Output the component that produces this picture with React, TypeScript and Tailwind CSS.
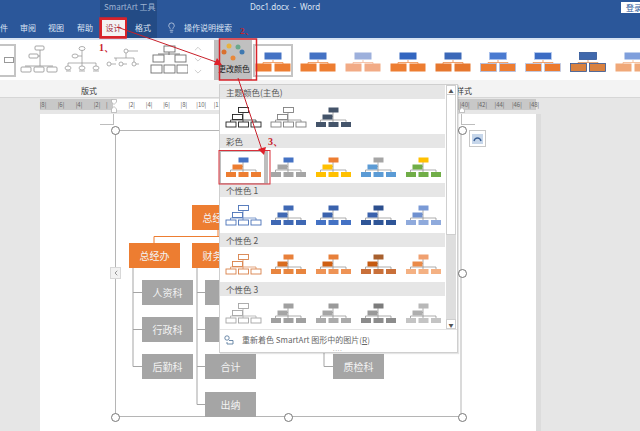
import React from "react";
import { Lightbulb, ChevronUp, ChevronDown, ChevronLeft } from "lucide-react";

type T = { top: string; mid: string; bot: string; outline?: string };

function ColorThumb({ t }: { t: T }) {
  const p = t.outline
    ? { fill: "#ffffff", stroke: t.outline, strokeWidth: 0.9 }
    : { stroke: "none" };
  return (
    <svg width="37" height="21" viewBox="0 0 37 21" className="shrink-0">
      <path d="M18 5V15M5.500 15V13H31V15M18 9.500H17" stroke={t.outline ?? "#8a8a8a"} strokeWidth="0.7" fill="none" />
      <rect x="13.500" y="0.500" width="10" height="5" fill={t.outline ? "#fff" : t.top} {...p} />
      <rect x="7.500" y="7.500" width="10" height="5" fill={t.outline ? "#fff" : t.mid} {...p} />
      <rect x="1" y="15" width="10" height="5" fill={t.outline ? "#fff" : t.bot} {...p} />
      <rect x="13.500" y="15" width="10" height="5" fill={t.outline ? "#fff" : t.bot} {...p} />
      <rect x="26" y="15" width="10" height="5" fill={t.outline ? "#fff" : t.bot} {...p} />
    </svg>
  );
}

const sections: { title: string; body: string; items: T[] }[] = [
  {
    title: "主题颜色(主色)",
    body: "h-[35px] pt-[8px]",
    items: [
      { top: "", mid: "", bot: "", outline: "#222222" },
      { top: "", mid: "", bot: "", outline: "#7f7f7f" },
      { top: "#44546a", mid: "#44546a", bot: "#44546a" },
    ],
  },
  {
    title: "彩色",
    body: "h-[35px] pt-[9px]",
    items: [
      { top: "#4472c4", mid: "#ed7d31", bot: "#ed7d31" },
      { top: "#4472c4", mid: "#a5a5a5", bot: "#a5a5a5" },
      { top: "#ed7d31", mid: "#ffc000", bot: "#ffc000" },
      { top: "#a5a5a5", mid: "#5b9bd5", bot: "#5b9bd5" },
      { top: "#ffc000", mid: "#70ad47", bot: "#70ad47" },
    ],
  },
  {
    title: "个性色 1",
    body: "h-[36px] pt-[8px]",
    items: [
      { top: "", mid: "", bot: "", outline: "#4a72b8" },
      { top: "#3f68b4", mid: "#3f68b4", bot: "#3f68b4" },
      { top: "#3a62ad", mid: "#3a62ad", bot: "#4472c4" },
      { top: "#2c4f8e", mid: "#3a62ad", bot: "#2f5597" },
      { top: "#7a9ad6", mid: "#6f90cf", bot: "#8faadc" },
    ],
  },
  {
    title: "个性色 2",
    body: "h-[35px] pt-[7px]",
    items: [
      { top: "", mid: "", bot: "", outline: "#d9824a" },
      { top: "#e8803a", mid: "#d96d20", bot: "#e8853f" },
      { top: "#e8803a", mid: "#cf5f12", bot: "#ee9355" },
      { top: "#a8602e", mid: "#c55a11", bot: "#c9703a" },
      { top: "#f0a070", mid: "#ea8a48", bot: "#f4b183" },
    ],
  },
  {
    title: "个性色 3",
    body: "h-[35px] pt-[7px]",
    items: [
      { top: "", mid: "", bot: "", outline: "#a5a5a5" },
      { top: "#a0a0a0", mid: "#a5a5a5", bot: "#a0a0a0" },
      { top: "#9a9a9a", mid: "#a5a5a5", bot: "#ababab" },
      { top: "#7c7c7c", mid: "#999999", bot: "#8c8c8c" },
      { top: "#b8b8b8", mid: "#aeaeae", bot: "#c4c4c4" },
    ],
  },
];

function StyleThumb({ top, bot, selected, edge }: { top: string; bot: string; selected?: boolean; edge?: string }) {
  return (
    <div className={`w-[40px] h-[33px] shrink-0 mr-[5px] flex items-center justify-center ${selected ? "border-2 border-[#c4c4c4] bg-white" : ""}`}>
      <svg width="36" height="20" viewBox="0 0 36 20" className="shrink-0 mt-[3px]">
        <path d="M18 8V10M8 13V10.500H28V13" stroke={bot} strokeWidth="0.7" fill="none" />
        <rect x="9.500" y="0.500" width="17" height="7" fill={top} stroke={edge ?? "none"} strokeWidth="0.8" />
        <rect x="0.500" y="11.500" width="16" height="8" fill={bot} stroke={edge ?? "none"} strokeWidth="0.8" />
        <rect x="19.500" y="11.500" width="16" height="8" fill={bot} stroke={edge ?? "none"} strokeWidth="0.8" />
      </svg>
    </div>
  );
}

const styles = [
  { top: "#4472c4", bot: "#ed7d31", selected: true },
  { top: "#4472c4", bot: "#ed7d31" },
  { top: "#9db0dc", bot: "#f2ab86" },
  { top: "#3366c0", bot: "#ed7d31" },
  { top: "#3b68b8", bot: "#e6772e" },
  { top: "#4a7ad0", bot: "#ed7d31", edge: "#a9c0ec" },
  { top: "#3c6cc4", bot: "#ec7a2e", edge: "#b9cdf0" },
  { top: "#3f68ac", bot: "#d9813f", edge: "#2f5597" },
  { top: "#7f9fdc", bot: "#f0a878" },
];

const G = "#8f8f8f";
function LayoutA() {
  return (
    <svg width="38" height="30" viewBox="0 0 38 30" fill="none" stroke={G} strokeWidth="0.8">
      <rect x="15" y="1" width="9" height="4" rx="1" /><rect x="9" y="9" width="9" height="4" rx="1" />
      <path d="M20 5V21M5 21H33M18 11H20" />
      <rect x="1" y="22" width="10" height="5" rx="1" /><rect x="14" y="22" width="10" height="5" rx="1" /><rect x="27" y="22" width="10" height="5" rx="1" />
    </svg>
  );
}
function LayoutB() {
  return (
    <svg width="38" height="30" viewBox="0 0 38 30" fill="none" stroke={G} strokeWidth="0.7">
      <ellipse cx="19" cy="3.500" rx="3" ry="2" /><ellipse cx="12" cy="11" rx="3" ry="2" />
      <ellipse cx="5" cy="23" rx="3" ry="2" /><ellipse cx="19" cy="23" rx="3" ry="2" /><ellipse cx="33" cy="23" rx="3" ry="2" />
      <path d="M19 5.500V21M5 21V18H33V21M15 11H19M3 26H8M16 26H22M30 26H36" />
    </svg>
  );
}
function LayoutC() {
  return (
    <svg width="34" height="24" viewBox="0 0 34 24" fill="none" stroke={G} strokeWidth="0.7">
      <circle cx="20" cy="3" r="2" /><circle cx="3" cy="16" r="2" /><circle cx="15" cy="16" r="2" /><circle cx="28" cy="16" r="2" />
      <path d="M20 5V10M8 10H28V14M10 10V13M22 3H32M5 16H10M17 16H21M30 16H33" />
    </svg>
  );
}
function LayoutD() {
  return (
    <svg width="38" height="30" viewBox="0 0 38 30" fill="none" stroke="#6f6f6f" strokeWidth="0.9">
      <rect x="14" y="1" width="11" height="6" /><rect x="3" y="10" width="11" height="7" /><rect x="25" y="10" width="11" height="7" />
      <rect x="1" y="20" width="11" height="8" /><rect x="14" y="20" width="11" height="8" /><rect x="27" y="20" width="11" height="8" />
      <path d="M19 7V10M8 9H30" />
    </svg>
  );
}

const rulerL = ["8", "6", "4", "2"];
const rulerM = ["2", "4", "6", "8", "10", "12", "14", "16", "18", "20", "22", "24", "26", "28", "30", "32", "34", "36", "38"];
const rulerR = ["40", "42", "44", "46", "48"];

const nodes: { id: string; label: string; x: string; o?: boolean }[] = [
  { id: "a", label: "总经理", x: "left-[76px] top-[74px]", o: true },
  { id: "b", label: "总经办", x: "left-[13px] top-[112px]", o: true },
  { id: "c", label: "财务科", x: "left-[76px] top-[112px]", o: true },
  { id: "d", label: "人资科", x: "left-[26px] top-[149px]" },
  { id: "e", label: "行政科", x: "left-[26px] top-[186px]" },
  { id: "f", label: "后勤科", x: "left-[26px] top-[223px]" },
  { id: "g", label: "", x: "left-[89px] top-[149px]" },
  { id: "h", label: "", x: "left-[89px] top-[186px]" },
  { id: "i", label: "合计", x: "left-[89px] top-[223px]" },
  { id: "j", label: "出纳", x: "left-[89px] top-[261px]" },
  { id: "k", label: "质检科", x: "left-[217px] top-[223px]" },
];

const handles = [
  "left-[-5px] top-[-5px]",
  "left-[-5px] top-[282px]",
  "left-[168px] top-[282px]",
  "left-[342px] top-[282px]",
  "left-[342px] top-[-5px]",
  "left-[342px] top-[138px]",
];

export default function App() {
  return (
    <div className="relative w-[640px] h-[431px] overflow-hidden bg-[#e6e6e6] flex flex-col font-['Noto_Sans_CJK_SC','Noto_Sans',sans-serif] text-[8px] leading-none text-[#444]">
      {/* Title bar + tabs */}
      <div className="h-[38px] bg-[#2b579a] flex shrink-0 text-[#dbe4f3]">
        <div className="w-[100px] flex items-end pb-[6px]">
          <span className="w-[20px] text-left">件</span>
          <span className="w-[28px]">审阅</span>
          <span className="w-[29px]">视图</span>
          <span>帮助</span>
        </div>
        <div className="w-[57px] bg-[#234b85] flex flex-col justify-between">
          <span className="pt-[3px] pl-[4px] text-[#9fb3d2] text-[8px]">SmartArt 工具</span>
          <div className="flex h-[20px] items-center">
            <span className="w-[27px] h-[20px] bg-[#f3f3f3] border-2 border-[#d8232a] text-[#a03040] flex items-center justify-center">设计</span>
            <span className="pl-[8px]">格式</span>
          </div>
        </div>
        <div className="flex-1 flex flex-col justify-between relative">
          <div className="flex justify-between items-start">
            <span className="ml-[93px] mt-[3px] text-[8px] font-['Noto_Sans','Noto_Sans_CJK_SC',sans-serif]">Doc1.docx&nbsp;&nbsp;-&nbsp;&nbsp;Word</span>
            <span className="mt-[2px] w-[19px] h-[11px] bg-white text-[#2b579a] flex items-center pl-[5px] overflow-hidden whitespace-nowrap">登录</span>
          </div>
          <div className="flex items-center gap-[7px] pl-[9px] pb-[5px]">
            <Lightbulb size={11} strokeWidth={1.4} className="text-[#e8eef7]" />
            <span>操作说明搜索</span>
          </div>
        </div>
      </div>

      {/* Ribbon */}
      <div className="h-[42px] bg-white border-t-2 border-[#d7e3f2] flex shrink-0 overflow-hidden">
        <div className="w-[214px] flex items-center shrink-0">
          <div className="w-[16px] h-[33px] border-y-2 border-r-2 border-[#c4c4c4] flex items-center justify-end shrink-0 mr-[4px]">
            <div className="w-[10px] h-[6px] border border-[#999]" />
          </div>
          <div className="w-[40px]"><LayoutA /></div>
          <div className="w-[45px] pl-[3px]"><LayoutB /></div>
          <div className="w-[45px] pl-[1px]"><LayoutC /></div>
          <div className="w-[42px]"><LayoutD /></div>
          <div className="w-[12px] h-[34px] flex flex-col items-center text-[#999] shrink-0">
            <ChevronUp size={12} strokeWidth={1} />
            <ChevronDown size={12} strokeWidth={1} />
            <ChevronDown size={12} strokeWidth={1} />
          </div>
        </div>
        <div className="w-px h-full bg-[#d0d0d0]" />
        <div className="w-[5px]" />
        <div className="w-[38px] h-full bg-[#c0c0c0] flex flex-col items-center shrink-0 pt-[2px]">
          <svg width="28" height="21" viewBox="0 0 28 21">
            <circle cx="10" cy="4" r="2.500" fill="#e8b23f" />
            <circle cx="19" cy="5" r="2.500" fill="#6aa88c" />
            <circle cx="5" cy="10" r="2.500" fill="#d9702f" />
            <circle cx="23" cy="10" r="2.500" fill="#3f78b0" />
            <circle cx="14" cy="16" r="2.500" fill="#e8883a" />
          </svg>
          <span className="text-[#222] text-[8px] mt-[2px] pl-[2px]">更改颜色</span>
        </div>
        <div className="flex items-center pl-[1px]">
          {styles.map((s, i) => (
            <StyleThumb key={i} {...s} />
          ))}
        </div>
      </div>

      {/* Ribbon group labels */}
      <div className="h-[18px] bg-[#f3f3f3] border-b border-[#d6d6d6] shrink-0 flex items-center pt-[4px]">
        <span className="ml-[81px] text-[#333] text-[8px]">版式</span>
        <span className="ml-[359px] text-[#333] text-[8px]">样式</span>
      </div>

      {/* Document */}
      <div className="flex-1 flex flex-col min-h-0">
        <div className="relative ml-[40px] w-[496px] h-[11px] mt-[1px] flex shrink-0 text-[6px] text-[#666]">
          <div className="w-[73px] bg-[#c8c8c8] flex items-center">
            <div className="flex items-center -ml-[6px]">
              {rulerL.map((n) => (
                <span key={n} className="w-[18px] text-center">|{n}|</span>
              ))}
              <span>|</span>
            </div>
          </div>
          <div className="flex-1 bg-white flex items-center pl-[10px] overflow-hidden">
            {rulerM.map((n) => (
              <span key={n} className="w-[17.400px] text-center shrink-0">|{n}|</span>
            ))}
          </div>
          <div className="w-[80px] bg-[#c8c8c8] flex items-center">
            {rulerR.map((n) => (
              <span key={n} className="w-[17.400px] text-center shrink-0">|{n}|</span>
            ))}
          </div>
          <svg className="absolute left-[71px] top-0" width="6" height="14" viewBox="0 0 6 14" fill="#fff" stroke="#aaa" strokeWidth="0.7">
            <path d="M0.500 0.500H5.500V3L3 5.500L0.500 3Z" />
            <path d="M3 7.500L5.500 10V13.500H0.500V10Z" />
          </svg>
          <svg className="absolute left-[419px] top-[8px]" width="6" height="6" viewBox="0 0 6 6" fill="#fff" stroke="#aaa" strokeWidth="0.7">
            <path d="M3 0.500L5.500 3V5.500H0.500V3Z" />
          </svg>
        </div>
        <div className="ml-[40px] w-[501px] flex-1 mt-[4px] bg-white border-r-[5px] border-[#dcdcdc] relative">
          {/* margin marks */}
          <div className="absolute left-[60px] top-0 w-[14px] h-[11px] border-r border-b border-[#bdbdbd]" />
          <div className="absolute left-[421px] top-0 w-[14px] h-[11px] border-l border-b border-[#bdbdbd]" />
          {/* Smart art frame */}
          <div className="absolute left-[75px] top-[16px] w-[347px] h-[287px] border border-[#b5b5b5] border-r-2 border-r-[#dadada]">
            <svg className="absolute left-0 top-0" width="347" height="287" fill="none">
              <path d="M38 112V105.500H200" stroke="#ed7d31" strokeWidth="1" />
              <path d="M102 99V105" stroke="#ed7d31" strokeWidth="1" />
              <path d="M17 136V235.500H26M17 161.500H26M17 198.500H26" stroke="#a5a5a5" strokeWidth="1" />
              <path d="M81 136V273.500H89M81 161.500H89M81 198.500H89M81 235.500H89" stroke="#a5a5a5" strokeWidth="1" />
              <path d="M208 210V235.500H217" stroke="#a5a5a5" strokeWidth="1" />
            </svg>
            {nodes.map((n) => (
              <div
                key={n.id}
                className={`absolute ${n.x} w-[51px] h-[25px] flex items-center justify-center text-[10px] text-[#f3f3f3] ${n.o ? "bg-[#ed7d31]" : "bg-[#a5a5a5]"}`}
              >
                {n.label}
              </div>
            ))}
            {handles.map((h) => (
              <div key={h} className={`absolute ${h} w-[9px] h-[9px] rounded-full bg-white border border-[#777]`} />
            ))}
            <div className="absolute left-[-6px] top-[136px] w-[11px] h-[12px] bg-[#f2f2f2] border border-[#d8d8d8] flex items-center justify-center text-[#666]">
              <ChevronLeft size={8} strokeWidth={2} />
            </div>
            <div className="absolute left-[353px] top-[-1px] w-[17px] h-[17px] border border-[#c8c8c8] bg-white flex items-center justify-center">
              <svg width="11" height="10" viewBox="0 0 11 10">
                <rect width="11" height="10" fill="#c6d6ea" />
                <path d="M2 7C3 3 8 3 9 7" stroke="#3a5f95" strokeWidth="1.400" fill="none" />
              </svg>
            </div>
          </div>
        </div>
      </div>

      {/* Color dropdown */}
      <div className="absolute left-[219px] top-[84px] w-[239px] h-[269px] bg-white border border-[#cfcfcf] flex flex-col z-10 shadow-[1px_1px_1px_rgba(0,0,0,0.1)]">
        <div className="flex flex-1 min-h-0">
          <div className="flex-1 min-w-0 flex flex-col">
            {sections.map((s) => (
              <div key={s.title}>
                <div className="h-[14px] bg-[#e6e6e6] flex items-center pl-[6px] text-[8.500px] text-[#555]">{s.title}</div>
                <div className={`${s.body} flex gap-[8px] pl-[5px] overflow-hidden`}>
                  {s.items.map((t, i) => (
                    <ColorThumb key={i} t={t} />
                  ))}
                </div>
              </div>
            ))}
          </div>
          <div className="w-[10px] ml-[1px] mr-px flex flex-col shrink-0 bg-[#dedede]">
            <div className="h-[10px] bg-white border border-[#cfcfcf] flex items-center justify-center text-[#555] text-[5px]">▲</div>
            <div className="h-[140px] bg-white border-x border-b border-[#cfcfcf]" />
            <div className="flex-1" />
            <div className="h-[10px] bg-white border border-[#cfcfcf] flex items-center justify-center text-[#555] text-[5px]">▼</div>
          </div>
        </div>
        <div className="h-[23px] border-t border-[#e4e4e4] shrink-0 relative flex items-center pl-[4px] gap-[8px] text-[#666] pb-[3px]">
          <svg width="10" height="10" viewBox="0 0 10 10" fill="none" stroke="#4a6f96" strokeWidth="0.8">
            <circle cx="3" cy="3" r="2.200" />
            <path d="M5 5.500H9V9H3V7" />
          </svg>
          <span className="text-[8px] whitespace-nowrap">重新着色 SmartArt 图形中的图片(<span className="underline">R</span>)</span>
          <span className="absolute left-[113px] bottom-[1px] text-[5px] text-[#888] tracking-[1px]">....</span>
        </div>
      </div>

      {/* Selected thumbnail */}
      <div className="absolute left-[220px] top-[151px] w-[48px] h-[33px] border-r-[4px] border-l border-y border-[#bdbdbd] z-20" />

      {/* Annotations */}
      <svg className="absolute left-0 top-0 z-30" width="640" height="431" fill="none">
        <rect x="100" y="18" width="26" height="20" stroke="#d8232a" strokeWidth="1.500" />
        <rect x="219.500" y="39" width="37" height="41" stroke="#d8232a" strokeWidth="1.500" />
        <rect x="219" y="150.500" width="51" height="33.500" stroke="#d8303a" strokeWidth="1" />
        <path d="M117 27L216 62" stroke="#c8202a" strokeWidth="1" />
        <path d="M222 65L214 65L217 58Z" fill="#e0202a" />
        <path d="M238 78L262 150" stroke="#c8202a" strokeWidth="1" />
        <path d="M264 155L258 149L266 147Z" fill="#e0202a" />
      </svg>
      <span className="absolute left-[99px] top-[43px] z-30 text-[10px] font-bold text-[#c8202a] font-['Liberation_Serif',serif]">1、</span>
      <span className="absolute left-[240px] top-[27px] z-30 text-[9px] font-bold text-[#c8202a] font-['Liberation_Serif',serif]">2、</span>
      <span className="absolute left-[268px] top-[137px] z-30 text-[10px] font-bold text-[#c8202a] font-['Liberation_Serif',serif]">3、</span>
    </div>
  );
}
